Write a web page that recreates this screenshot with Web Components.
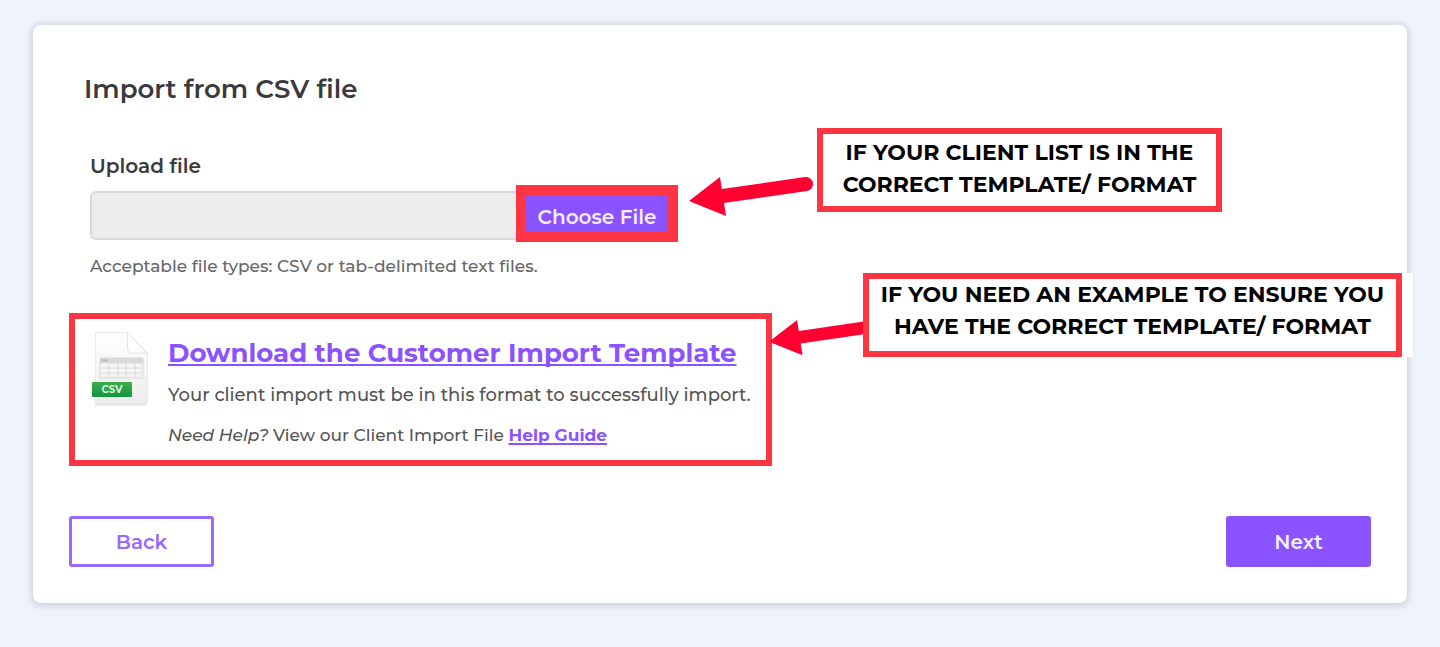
<!DOCTYPE html>
<html lang="en">
<head>
<meta charset="utf-8">
<title>Import from CSV file</title>
<style>
    body{
        margin: 0;
        background-color: #eff3fc;
        color: #3a3a3c;
        font-family: Montserrat, Inter, "Open Sans", sans-serif;
    }
</style>
</head>
<body>
<import-card>
    <span slot="title">Import from CSV file</span>
    <file-upload label="Upload file" hint="Acceptable file types: CSV or tab-delimited text files."></file-upload>
    <template-download></template-download>
    <action-button slot="actions" kind="outline">Back</action-button>
    <action-button slot="actions">Next</action-button>
    <call-out slot="notes" class="upload-note">IF YOUR CLIENT LIST IS IN THE<br>CORRECT TEMPLATE/ FORMAT</call-out>
    <call-out slot="notes" class="template-note">IF YOU NEED AN EXAMPLE TO ENSURE YOU<br>HAVE THE CORRECT TEMPLATE/ FORMAT</call-out>
</import-card>

<script>
class ImportCard extends HTMLElement{
    constructor(){
        super();
        this.attachShadow({mode:"open"});
        this.render();
    }
    render(){
        const style = `
        <style>
            :host{
                display: block;
                position: relative;
                margin: 25px 33px;
                padding: 48px 36px 36px;
                background-color: white;
                border-radius: 8px;
                box-shadow: 0 1px 6px 2px rgba(90,100,110,.24);
            }
            h1{
                margin: 0 0 45px 15px;
                font-size: 26px;
                line-height: 32px;
                font-weight: 600;
            }
            main{
                display: flex;
                flex-direction: column;
                align-items: flex-start;
            }
            footer{
                display: flex;
                justify-content: space-between;
                margin-top: 50px;
            }
            ::slotted(call-out){
                position: absolute;
            }
            /* each note sits over the card, beside the part it points at */
            ::slotted(.upload-note){
                left: 784px;
                top: 103px;
                width: 405px;
                --text-top: 3px;
                --arrow-left: -128px;
                --arrow-top: 49px;
                --arrow-width: 128px;
            }
            ::slotted(.template-note){
                left: 830px;
                top: 248px;
                width: 539px;
                --arrow-left: -94px;
                --arrow-top: 47px;
                --arrow-width: 116px;
                --edge: 11px;
            }
        </style>`
        const template = `
        <h1><slot name="title"></slot></h1>
        <main><slot></slot></main>
        <footer><slot name="actions"></slot></footer>
        <slot name="notes"></slot>
        `
        this.shadowRoot.innerHTML = `${style} ${template}`
    }
}

class FileUpload extends HTMLElement{
    constructor(){
        super();
        this.attachShadow({mode:"open"});
        this.render();
    }
    render(){
        const style = `
        <style>
            :host{
                display: block;
                margin-left: 21px;
            }
            label{
                display: block;
                font-size: 20px;
                line-height: 32px;
                font-weight: 600;
            }
            .field{
                display: flex;
                align-items: flex-end;
                margin-top: 3px;
            }
            input{
                box-sizing: border-box;
                width: 426px;
                height: 49px;
                margin: 0 0 2px;
                border: 2px solid #d9d9d9;
                border-right: 0;
                border-radius: 6px 0 0 6px;
                background-color: #ececec;
            }
            button{
                box-sizing: border-box;
                width: 162px;
                height: 57px;
                padding: 6px 0 0;
                border: 10px solid #ff3544;
                background-color: #8b53ff;
                color: #f3edff;
                font: inherit;
                font-size: 20px;
                line-height: 32px;
                font-weight: 600;
                white-space: nowrap;
            }
            p{
                margin: 8px 0 0;
                color: #666;
                font-size: 17px;
                line-height: 32px;
                font-weight: 500;
            }
        </style>`
        const template = `
        <label for="file-name">${this.getAttribute("label")}</label>
        <div class="field">
            <input type="text" id="file-name" readonly>
            <button type="button">Choose File</button>
        </div>
        <p>${this.getAttribute("hint")}</p>
        `
        this.shadowRoot.innerHTML = `${style} ${template}`
    }
}

class TemplateDownload extends HTMLElement{
    constructor(){
        super();
        this.attachShadow({mode:"open"});
        this.render();
    }
    render(){
        const style = `
        <style>
            :host{
                display: flex;
                gap: 18px;
                box-sizing: border-box;
                width: 703px;
                margin-top: 31px;
                padding: 12px 0 9px 15px;
                border: 6px solid #ff3544;
            }
            svg{
                flex: none;
                width: 60px;
                height: 76px;
            }
            .text{
                white-space: nowrap;
            }
            a{
                color: #8b53ff;
                text-decoration-thickness: 2px;
                text-underline-offset: 2px;
                text-decoration-skip-ink: none;
            }
            h2{
                margin: 6px 0 10px;
                font-size: 26px;
                line-height: 32px;
                font-weight: 700;
            }
            p{
                margin: 0 0 8px;
                color: #555;
                font-size: 18px;
                line-height: 32px;
                font-weight: 500;
            }
            .help{
                margin: 0;
                font-size: 17px;
            }
            .help a{
                font-weight: 700;
            }
        </style>`
        const template = `
        <svg viewBox="0 0 60 76" aria-hidden="true">
            <defs>
                <linearGradient id="paper" x1="0" y1="0" x2="0" y2="1">
                    <stop offset="0" stop-color="#fefefe"/>
                    <stop offset="1" stop-color="#ececec"/>
                </linearGradient>
                <linearGradient id="tag" x1="0" y1="0" x2="0" y2="1">
                    <stop offset="0" stop-color="#3bae4c"/>
                    <stop offset="1" stop-color="#119640"/>
                </linearGradient>
            </defs>
            <path d="M5 73.500H57" stroke="#e4e4e4" stroke-width="2"/>
            <path d="M7 1.500H38L57.500 22V71Q57.500 73 55.500 73H7Q5.500 73 5.500 71V3Q5.500 1.500 7 1.500Z" fill="url(#paper)" stroke="#e9e9e9"/>
            <path d="M37.500 2V17Q37.500 22 43 22H57Z" fill="#fff" stroke="#e4e4e4"/>
            <path d="M10 27H53V32H10Z" fill="#dadada"/>
            <path d="M10 27H53V47H10ZM10 32H53M10 37H53M10 42H53M19 27V47M28 27V47M36 27V47M45 27V47" fill="none" stroke="#d9d9d9"/>
            <path d="M11 29.500H18" stroke="#bbb" stroke-width="2"/>
            <rect x="2" y="51" width="40" height="15" rx="1" fill="url(#tag)"/>
            <text x="22" y="62" text-anchor="middle" fill="#d8f3dc" font-size="10" font-weight="700">CSV</text>
        </svg>
        <div class="text">
            <h2><a href="#template">Download the Customer Import Template</a></h2>
            <p>Your client import must be in this format to successfully import.</p>
            <p class="help"><em>Need Help?</em> View our Client Import File <a href="#help">Help Guide</a></p>
        </div>
        `
        this.shadowRoot.innerHTML = `${style} ${template}`
    }
}

class ActionButton extends HTMLElement{
    constructor(){
        super();
        this.attachShadow({mode:"open"});
        this.render();
    }
    render(){
        const style = `
        <style>
            :host{
                display: block;
            }
            button{
                box-sizing: border-box;
                width: 145px;
                height: 51px;
                padding: 0;
                border: 3px solid #8b53ff;
                border-radius: 3px;
                background-color: #8b53ff;
                color: #f3edff;
                font: inherit;
                font-size: 20px;
                line-height: 32px;
                font-weight: 600;
            }
            :host([kind="outline"]) button{
                background-color: white;
                border-color: #9a69ff;
                color: #9a69ff;
            }
        </style>`
        const template = `<button type="button"><slot></slot></button>`
        this.shadowRoot.innerHTML = `${style} ${template}`
    }
}

class CallOut extends HTMLElement{
    constructor(){
        super();
        this.attachShadow({mode:"open"});
        this.render();
    }
    render(){
        const style = `
        <style>
            :host{
                display: block;
            }
            .box{
                position: relative;
                box-sizing: border-box;
                min-height: 84px;
                padding-top: var(--text-top, 0);
                border: 6px solid #ff3544;
                background-color: white;
                box-shadow: var(--edge, 0) 0 0 white;
                color: black;
                font-size: 22px;
                line-height: 32px;
                font-weight: 700;
                text-align: center;
                white-space: nowrap;
            }
            svg{
                position: absolute;
                left: var(--arrow-left);
                top: var(--arrow-top);
                width: var(--arrow-width);
            }
        </style>`
        const template = `
        <svg viewBox="0 0 128 40" aria-hidden="true">
            <path d="M34 19L117 7" stroke="#ff0030" stroke-width="14" stroke-linecap="round"/>
            <path d="M0 24L31 0L37 39Z" fill="#ff0030"/>
        </svg>
        <div class="box"><slot></slot></div>
        `
        this.shadowRoot.innerHTML = `${style} ${template}`
    }
}

customElements.define("import-card", ImportCard)
customElements.define("file-upload", FileUpload)
customElements.define("template-download", TemplateDownload)
customElements.define("action-button", ActionButton)
customElements.define("call-out", CallOut)
</script>
</body>
</html>
